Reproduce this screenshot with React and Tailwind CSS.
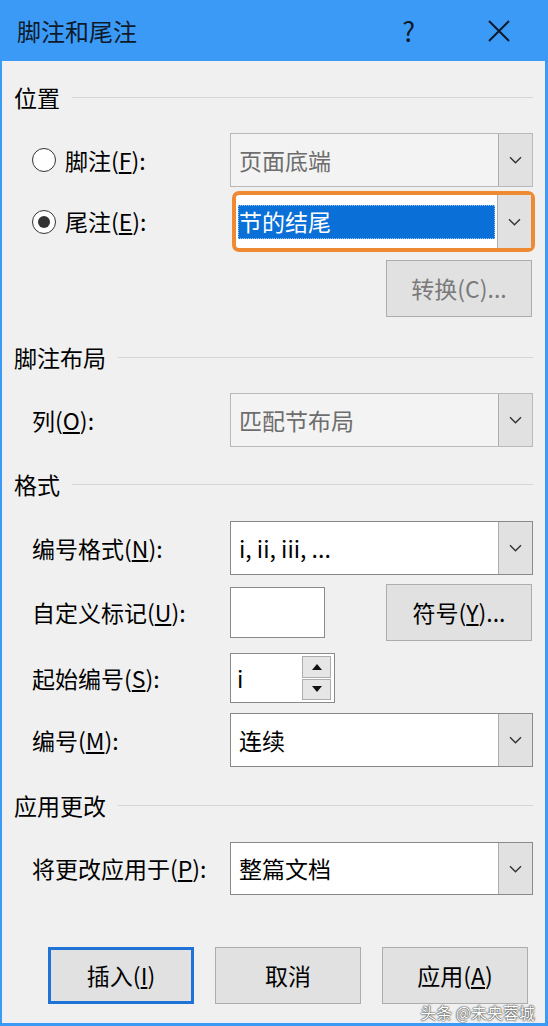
import React from 'react';

const font = { fontFamily: '"Noto Sans CJK SC", "Noto Sans", sans-serif' };

const Chevron = () => (
  <svg width="13" height="8" viewBox="0 0 13 8" fill="none">
    <path d="M1 1.2 L6.5 6.8 L12 1.2" stroke="#333" strokeWidth="1.4" />
  </svg>
);

const DropButton = () => (
  <div className="w-[34px] h-full flex items-center justify-center bg-[#e1e1e1] border-l border-[#adadad]">
    <Chevron />
  </div>
);

const Combo = ({ value, disabled = false, h = 'h-[54px]' }) => (
  <div
    className={`w-[303px] ${h} flex border ${
      disabled ? 'bg-[#f3f3f3] border-[#b9b9b9]' : 'bg-white border-[#8a8a8a]'
    }`}
  >
    <div
      className={`flex-1 flex items-center pl-[8px] text-[23px] ${
        disabled ? 'text-[#6d6d6d]' : 'text-black'
      }`}
    >
      {value}
    </div>
    <DropButton />
  </div>
);

const SectionHeader = ({ title }) => (
  <div className="h-[28px] flex items-center pl-[12px] pr-[12px]">
    <span className="text-[23px] text-black leading-none">{title}</span>
    <div className="flex-1 h-px bg-[#d6d6d6] ml-[12px]" />
  </div>
);

const Label = ({ children }) => (
  <div className="w-[228px] pl-[30px] text-[23px] text-black leading-none">{children}</div>
);

const Button = ({ children, primary = false, disabled = false }) => (
  <div
    className={`w-[146px] h-[57px] flex items-center justify-center bg-[#e1e1e1] text-[23px] ${
      primary ? 'border-[3px] border-[#1f73d6]' : 'border border-[#adadad]'
    } ${disabled ? 'text-[#7a7a7a]' : 'text-black'}`}
  >
    {children}
  </div>
);

const Radio = ({ checked }) => (
  <div className="w-[24px] h-[24px] rounded-full border-[1.5px] border-[#333] bg-white flex items-center justify-center">
    {checked && <div className="w-[12px] h-[12px] rounded-full bg-[#333]" />}
  </div>
);

export default function App() {
  return (
    <div className="w-[548px] h-[1026px] bg-[#3a9af5] flex flex-col" style={font}>
      {/* title bar */}
      <div className="h-[61px] flex items-center pl-[17px] pr-[37px] text-[#0e1a2c]">
        <span className="text-[24px] leading-none">脚注和尾注</span>
        <span className="ml-auto text-[27px] leading-none mr-[72px]">?</span>
        <svg width="24" height="24" viewBox="0 0 24 24">
          <path d="M2 2 L22 22 M22 2 L2 22" stroke="#0e1a2c" strokeWidth="2" />
        </svg>
      </div>

      {/* body */}
      <div className="relative flex-1 ml-[2px] mr-[3px] mb-[3px] bg-[#f0f0f0] flex flex-col">
        <div className="mt-[22px]">
          <SectionHeader title="位置" />
        </div>

        <div className="mt-[22px] flex items-center h-[54px]">
          <div className="w-[228px] pl-[30px] flex items-center gap-[9px] text-[23px] text-black">
            <Radio checked={false} />
            <span>
              脚注(<u>F</u>):
            </span>
          </div>
          <Combo value="页面底端" disabled />
        </div>

        <div className="mt-[4px] flex items-center h-[61px]">
          <div className="w-[230px] pl-[30px] flex items-center gap-[9px] text-[23px] text-black">
            <Radio checked />
            <span>
              尾注(<u>E</u>):
            </span>
          </div>
          <div className="w-[303px] h-[61px] border-[4px] border-[#ef8a33] rounded-[7px] bg-white flex">
            <div className="flex-1 flex items-center pl-[2px] pr-[2px]">
              <div className="w-full h-[34px] bg-[#0a6fd6] border border-dotted border-[#9cc6f0] flex items-center text-[23px] text-white leading-none">
                节的结尾
              </div>
            </div>
            <DropButton />
          </div>
        </div>

        <div className="mt-[8px] flex justify-end pr-[13px]">
          <Button disabled>转换(C)...</Button>
        </div>

        <div className="mt-[26px]">
          <SectionHeader title="脚注布局" />
        </div>

        <div className="mt-[22px] flex items-center">
          <Label>
            列(<u>O</u>):
          </Label>
          <Combo value="匹配节布局" disabled />
        </div>

        <div className="mt-[23px]">
          <SectionHeader title="格式" />
        </div>

        <div className="mt-[23px] flex items-center">
          <Label>
            编号格式(<u>N</u>):
          </Label>
          <Combo value="i, ii, iii, ..." />
        </div>

        <div className="mt-[9px] flex items-center h-[57px]">
          <Label>
            自定义标记(<u>U</u>):
          </Label>
          <div className="w-[95px] h-[51px] bg-white border border-[#8a8a8a]" />
          <div className="ml-auto mr-[13px]">
            <Button>
              符号(<u>Y</u>)...
            </Button>
          </div>
        </div>

        <div className="mt-[12px] flex items-center">
          <Label>
            起始编号(<u>S</u>):
          </Label>
          <div className="w-[105px] h-[50px] bg-white border border-[#8a8a8a] flex">
            <div className="flex-1 pl-[6px] flex items-center text-[23px] text-black">i</div>
            <div className="w-[29px] my-[2px] mr-[3px] flex flex-col gap-[1px]">
              <div className="flex-1 bg-[#e6e6e6] border border-[#adadad] flex items-center justify-center">
                <svg width="10" height="6" viewBox="0 0 10 6">
                  <path d="M0 6 L5 0 L10 6 Z" fill="#111" />
                </svg>
              </div>
              <div className="flex-1 bg-[#e6e6e6] border border-[#adadad] flex items-center justify-center">
                <svg width="10" height="6" viewBox="0 0 10 6">
                  <path d="M0 0 L5 6 L10 0 Z" fill="#111" />
                </svg>
              </div>
            </div>
          </div>
        </div>

        <div className="mt-[10px] flex items-center">
          <Label>
            编号(<u>M</u>):
          </Label>
          <Combo value="连续" />
        </div>

        <div className="mt-[24px]">
          <SectionHeader title="应用更改" />
        </div>

        <div className="mt-[23px] flex items-center">
          <Label>
            将更改应用于(<u>P</u>):
          </Label>
          <Combo value="整篇文档" h="h-[53px]" />
        </div>

        <div className="mt-[52px] flex items-center pl-[46px] gap-[21px]">
          <Button primary>
            插入(<u>I</u>)
          </Button>
          <Button>取消</Button>
          <Button>
            应用(<u>A</u>)
          </Button>
        </div>

        <div className="absolute right-[10px] bottom-[3px] text-[16px] text-white [text-shadow:0_0_2px_#333,0_0_1px_#000] leading-none">
          头条 @未央蓉城
        </div>
      </div>
    </div>
  );
}
